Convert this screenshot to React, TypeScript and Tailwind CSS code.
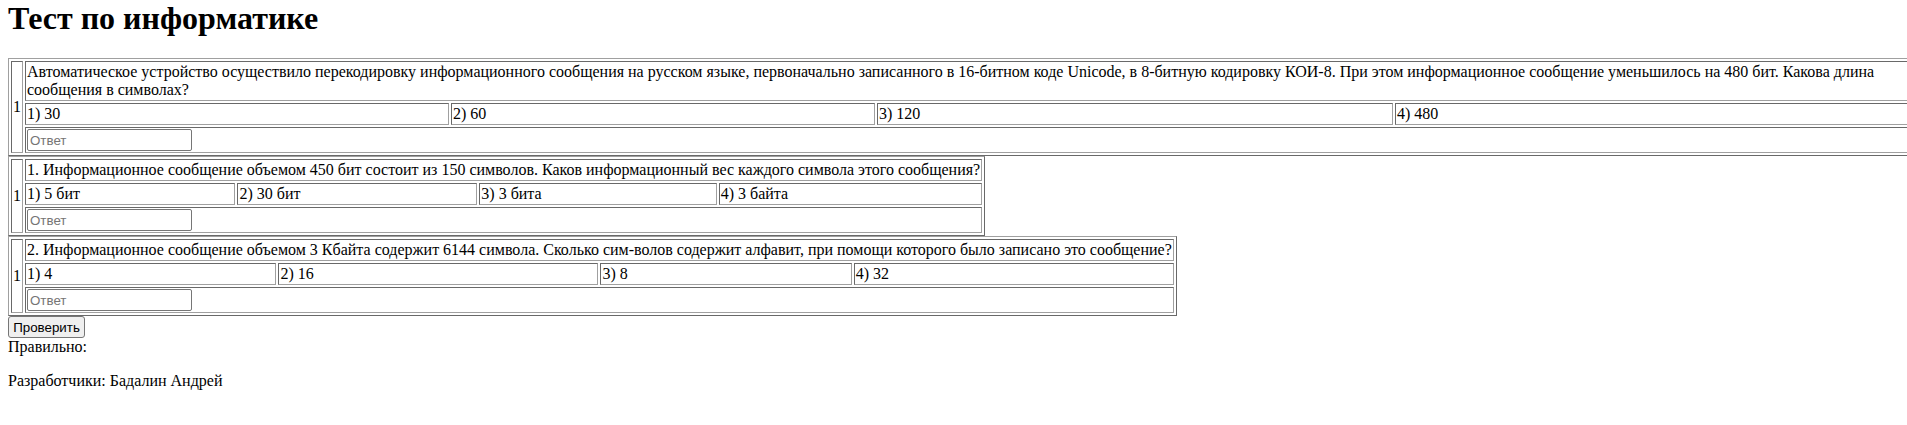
const td =
  'border border-t-[#696969] border-l-[#696969] border-r-[#a0a0a0] border-b-[#a0a0a0] p-px align-middle text-left font-normal'
const tbl =
  'border-separate border-spacing-[2px] border border-t-[#a0a0a0] border-l-[#a0a0a0] border-r-[#696969] border-b-[#696969]'

type Question = {
  text: string
  answers: string[]
  cols?: number[]
}

const questions: Question[] = [
  {
    text: 'Автоматическое устройство осуществило перекодировку информационного сообщения на русском языке, первоначально записанного в 16-битном коде Unicode, в 8-битную кодировку КОИ-8. При этом информационное сообщение уменьшилось на 480 бит. Какова длина сообщения в символах?',
    answers: ['1) 30', '2) 60', '3) 120', '4) 480'],
    cols: [12, 424, 424, 516, 550]
  },
  {
    text: '1. Информационное сообщение объемом 450 бит состоит из 150 символов. Каков информационный вес каждого символа этого сообщения?',
    answers: ['1) 5 бит', '2) 30 бит', '3) 3 бита', '4) 3 байта']
  },
  {
    text: '2. Информационное сообщение объемом 3 Кбайта содержит 6144 символа. Сколько сим-волов содержит алфавит, при помощи которого было записано это сообщение?',
    answers: ['1) 4', '2) 16', '3) 8', '4) 32']
  }
]

function QuestionTable({ q }: { q: Question }) {
  return (
    <table className={q.cols ? `${tbl} table-fixed w-[1940px]` : tbl}>
      {q.cols && (
        <colgroup>
          {q.cols.map((w, i) => (
            <col key={i} style={{ width: w }} />
          ))}
        </colgroup>
      )}
      <tbody>
        <tr>
          <td rowSpan={3} className={td}>
            1
          </td>
          <td colSpan={4} className={td}>
            {q.text}
          </td>
        </tr>
        <tr>
          {q.answers.map((a) => (
            <td key={a} className={td}>
              {a}
            </td>
          ))}
        </tr>
        <tr>
          <td colSpan={4} className={td}>
            <input
              type="text"
              placeholder="Ответ"
              className="block w-[165px] h-[22px] px-[2px] border border-[#767676] rounded-[2px] bg-white text-[13.33px] font-['Liberation_Sans',Arial,sans-serif] text-black placeholder:text-[#757575] outline-none"
            />
          </td>
        </tr>
      </tbody>
    </table>
  )
}

export default function App() {
  return (
    <div className="w-full overflow-hidden bg-white px-2 text-black text-[16px] leading-[normal] font-['Liberation_Serif','Times_New_Roman',serif]">
      <h1 className="m-0 mb-[21.44px] text-[32px] font-bold leading-[normal]">Тест по информатике</h1>

      {questions.map((q, i) => (
        <QuestionTable key={i} q={q} />
      ))}

      <button className="block w-[77px] h-[22px] px-0 text-center border border-[#767676] rounded-[3px] bg-[#efefef] text-[13.33px] leading-[normal] font-['Liberation_Sans',Arial,sans-serif] text-black">
        Проверить
      </button>
      <div>Правильно:</div>
      <p className="my-4">Разработчики: Бадалин Андрей</p>
    </div>
  )
}
